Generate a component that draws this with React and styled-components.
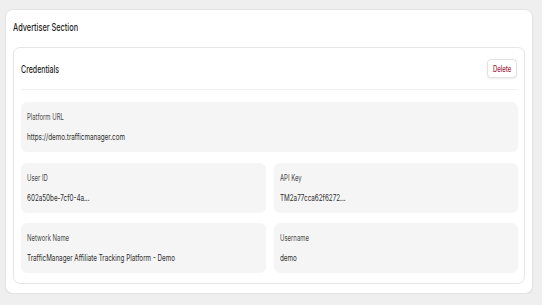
import React from "react";
import styled, { createGlobalStyle } from "styled-components";

const Global = createGlobalStyle`
  html, body { margin: 0; padding: 0; background: #efefef; }
  body { font-family: Inter, "Noto Sans", sans-serif; -webkit-font-smoothing: antialiased; }
`;

const Page = styled.div`
  padding: 9px 9px 0 5px;
`;

const OuterCard = styled.section`
  box-sizing: border-box;
  height: 285px;
  background: #ffffff;
  border: 1px solid #e4e4e4;
  border-radius: 8px;
  box-shadow: 0 1px 2px rgba(0, 0, 0, 0.05);
  padding: 0 7px 11px 7px;
  display: flex;
  flex-direction: column;
`;

const Squeeze = styled.span`
  display: inline-block;
  white-space: nowrap;
  transform: scaleX(${(p) => p.$sx || 0.7});
  transform-origin: ${(p) => (p.$center ? "center" : "left")} center;
`;

const SectionTitle = styled.h2`
  margin: 11px 0 12px 0;
  font-size: 10.5px;
  line-height: 14px;
  font-weight: 500;
  color: #1f1f1f;
`;

const InnerCard = styled.div`
  flex: 1;
  box-sizing: border-box;
  border: 1px solid #e6e6e6;
  border-radius: 7px;
  padding: 0 6px 10px 7px;
  display: flex;
  flex-direction: column;
`;

const Header = styled.div`
  height: 41px;
  display: flex;
  align-items: center;
  justify-content: space-between;
`;

const CardTitle = styled.h3`
  margin: 0;
  font-size: 10px;
  line-height: 12px;
  font-weight: 500;
  color: #1f1f1f;
`;

const DeleteButton = styled.button`
  box-sizing: border-box;
  width: 30px;
  height: 19px;
  padding: 0;
  margin-right: 1px;
  background: #ffffff;
  border: 1px solid #e2e2e2;
  border-radius: 4px;
  box-shadow: 0 1px 2px rgba(0, 0, 0, 0.08);
  font-family: inherit;
  font-size: 8.5px;
  font-weight: 500;
  color: #9b1c3a;
  display: flex;
  align-items: center;
  justify-content: center;
  cursor: pointer;
`;

const Divider = styled.hr`
  margin: 0 0 12px 0;
  border: 0;
  height: 1px;
  background: #f0f0f0;
`;

const FieldGrid = styled.div`
  display: grid;
  grid-template-columns: 1fr 1fr;
  column-gap: 8px;
  row-gap: 10.5px;
`;

const Field = styled.div`
  grid-column: ${(p) => (p.$full ? "1 / -1" : "auto")};
  box-sizing: border-box;
  height: 50px;
  background: #f5f5f5;
  border-radius: 6px;
  padding: 10px 6px 10px 6px;
  display: flex;
  flex-direction: column;
  gap: 10px;
  overflow: hidden;
`;

const Label = styled.div`
  font-size: 8.5px;
  line-height: 10px;
  font-weight: 400;
  color: #4a4a4a;
`;

const Value = styled.div`
  font-size: 9px;
  line-height: 10px;
  font-weight: 400;
  color: #2e2e2e;
`;

const fields = [
  { label: "Platform URL", value: "https://demo.trafficmanager.com", full: true },
  { label: "User ID", value: "602a50be-7cf0-4a..." },
  { label: "API Key", value: "TM2a77cca62f6272..." },
  { label: "Network Name", value: "TrafficManager Affiliate Tracking Platform - Demo" },
  { label: "Username", value: "demo" },
];

export default function App() {
  return (
    <>
      <Global />
      <Page>
        <OuterCard>
          <SectionTitle>
            <Squeeze>Advertiser Section</Squeeze>
          </SectionTitle>
          <InnerCard>
            <Header>
              <CardTitle>
                <Squeeze>Credentials</Squeeze>
              </CardTitle>
              <DeleteButton>
                <Squeeze $center>Delete</Squeeze>
              </DeleteButton>
            </Header>
            <Divider />
            <FieldGrid>
              {fields.map((f) => (
                <Field key={f.label} $full={f.full}>
                  <Label>
                    <Squeeze>{f.label}</Squeeze>
                  </Label>
                  <Value>
                    <Squeeze>{f.value}</Squeeze>
                  </Value>
                </Field>
              ))}
            </FieldGrid>
          </InnerCard>
        </OuterCard>
      </Page>
    </>
  );
}
